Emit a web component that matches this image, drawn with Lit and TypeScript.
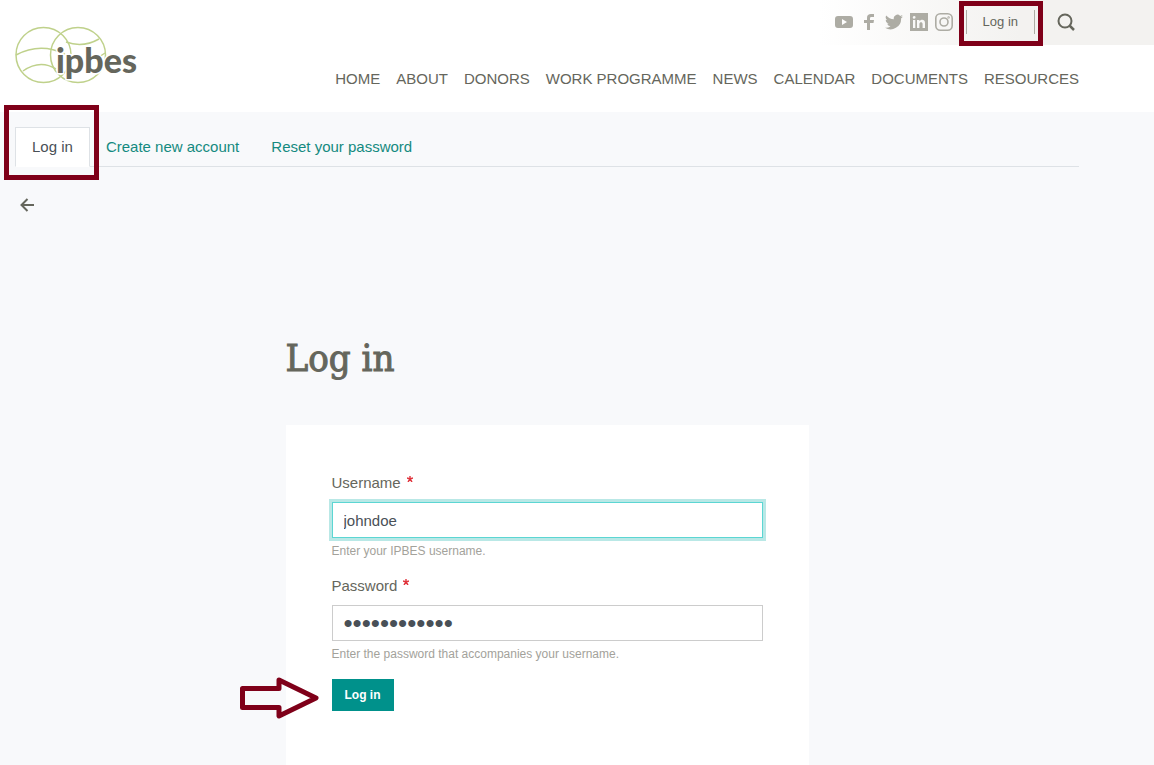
import { LitElement, html, css } from "lit";
import { customElement } from "lit/decorators.js";

const NAV = ["Home", "About", "Donors", "Work programme", "News", "Calendar", "Documents", "Resources"];

@customElement("site-header")
export class SiteHeader extends LitElement {
  static styles = css`
    :host { display: block; background: #fff; color: #65665c; }
    a { color: inherit; text-decoration: none; }
    svg { display: block; }
    .header { display: flex; justify-content: space-between; min-height: 112px; }
    .logo { padding: 24px 0 0 15px; }
    .wordmark { font: 900 34px Lato, sans-serif; fill: #65665c; }
    .right { display: flex; flex-direction: column; align-items: flex-end; }
    .top {
      display: flex; align-items: center; height: 45px; box-sizing: border-box;
      padding: 0 79px 1px 16px;
      background: linear-gradient(to right, #fff, #f3f2f0 60%);
    }
    .social { display: flex; align-items: center; gap: 7px; margin-right: 13px; color: #adaca4; }
    .login {
      position: relative; font-size: 13px; line-height: 24px; padding: 0 16px;
      border: solid #adaca4; border-width: 0 1px;
    }
    .mark {
      position: absolute; inset: -9px -9px -12px -8px; border: 5px solid #7f0019; pointer-events: none;
    }
    .search { border: 0; background: none; padding: 0; margin-left: 22px; color: #65665c; }
    nav { display: flex; flex-wrap: wrap; gap: 16px; padding: 22px 75px 0 0; font-size: 15px; line-height: 24px; text-transform: uppercase; }
  `;
  render() {
    return html`<header class="header">
      <a class="logo" href="#" aria-label="ipbes">
        <svg width="136" height="62" viewBox="0 0 136 62">
          <g fill="none" stroke="#bfd18b" stroke-width="1.5">
            <circle cx="28.500" cy="31" r="27.500" />
            <circle cx="63" cy="31" r="27.500" />
            <path d="M1 31Q25 18 50 30M8 47Q25 35 41 45M51 18Q68 24 84 15M84 33L90 29" />
          </g>
          <text class="wordmark" x="41" y="49" stroke="#fff" stroke-width="3" paint-order="stroke">ipbes</text>
        </svg>
      </a>
      <div class="right">
        <div class="top">
          <div class="social">
            <a href="#" aria-label="YouTube"><svg width="18" height="18" viewBox="0 0 18 18"><path fill="currentColor" fill-rule="evenodd" d="M3 3h12q3 0 3 3v6q0 3-3 3H3q-3 0-3-3V6q0-3 3-3zM7 6v6l5-3z" /></svg></a>
            <a href="#" aria-label="Facebook"><svg width="18" height="18" viewBox="0 0 18 18"><path fill="currentColor" d="M7 17V10H4V7h3V5c0-3 1.500-4 4-4h3v3h-2c-1.500 0-2 .4-2 1.500V7h4l-.5 3H10v7z" /></svg></a>
            <a href="#" aria-label="Twitter"><svg width="18" height="18" viewBox="0 0 24 24"><path fill="currentColor" d="M24 4.600a10 10 0 0 1-2.800.8 5 5 0 0 0 2.100-2.700 10 10 0 0 1-3.100 1.200 4.900 4.900 0 0 0-8.400 4.500A14 14 0 0 1 1.700 3.200a4.900 4.900 0 0 0 1.500 6.500 5 5 0 0 1-2.200-.6 4.900 4.900 0 0 0 3.900 4.900 5 5 0 0 1-2.200.1 4.900 4.900 0 0 0 4.600 3.400A9.900 9.900 0 0 1 0 19.500a14 14 0 0 0 21.500-12.400A10 10 0 0 0 24 4.600z" /></svg></a>
            <a href="#" aria-label="LinkedIn"><svg width="18" height="18" viewBox="0 0 18 18"><path fill="currentColor" fill-rule="evenodd" d="M0 0h18v18H0zM3 7v8h2.300V7zM4.100 3a1.400 1.400 0 1 0 .1 2.800A1.400 1.400 0 0 0 4.100 3zM7 7v8h2.400v-4c0-2.500 3.200-2.500 3.200 0v4H15v-5c0-4-4-4-5.600-1.800V7z" /></svg></a>
            <a href="#" aria-label="Instagram"><svg width="18" height="18" viewBox="0 0 18 18" fill="none" stroke="currentColor" stroke-width="1.600"><rect x=".8" y=".8" width="16.400" height="16.400" rx="4.500" /><circle cx="9" cy="9" r="4" /><circle cx="13.600" cy="4.400" r=".4" /></svg></a>
          </div>
          <a class="login" href="#">Log in<span class="mark"></span></a>
          <button class="search" aria-label="Search"><svg width="18" height="18" viewBox="0 0 18 18" fill="none" stroke="currentColor" stroke-width="2"><circle cx="8" cy="8" r="6.500" /><path d="M12.500 12.500L17 17" stroke-width="2.500" /></svg></button>
        </div>
        <nav>${NAV.map((n) => html`<a href="#">${n}</a>`)}</nav>
      </div>
    </header>`;
  }
}

@customElement("login-form")
export class LoginForm extends LitElement {
  static styles = css`
    :host { display: flex; flex-direction: column; flex: 1; }
    .card { position: relative; flex: 1; background: #fff; padding: 46px 46px 54px; }
    .field + .field { margin-top: 14px; }
    label { display: flex; gap: 6px; font-size: 15px; line-height: 24px; color: #65665c; margin-bottom: 7px; }
    .star { margin-top: 5px; }
    input {
      display: block; box-sizing: border-box; width: 100%; height: 36px; padding: 0 11px;
      border: 1px solid #ccc; border-radius: 0; background: #fff; color: #495057;
      font: 15px "Liberation Sans", Arial, sans-serif; outline: 0;
    }
    .active { border-color: #5cd6d3; box-shadow: 0 0 0 3px #b9e8e6; }
    .secret { font-size: 26px; }
    .help { font-size: 12px; line-height: 18px; color: #a3a29b; margin: 4px 0 0; }
    .actions { position: relative; margin-top: 16px; }
    .submit {
      display: block; height: 32px; padding: 0 13px; border: 0; background: #00918b; color: #fff;
      font: bold 12px "Liberation Sans", Arial, sans-serif;
    }
    .arrow { position: absolute; left: -92px; top: -3px; }
  `;
  star() {
    return html`<svg class="star" width="6" height="6" viewBox="0 0 6 6" stroke="#e0343c" stroke-width="1.400" aria-hidden="true"><path d="M3 0v3M0 2l3 1 3-1M1 6l2-3 2 3" fill="none" /></svg>`;
  }
  render() {
    return html`<form class="card" @submit=${(e: Event) => e.preventDefault()}>
      <div class="field">
        <label for="user">Username ${this.star()}</label>
        <input id="user" class="active" type="text" value="johndoe" required />
        <p class="help">Enter your IPBES username.</p>
      </div>
      <div class="field">
        <label for="pass">Password ${this.star()}</label>
        <input id="pass" class="secret" type="password" value="secretsecret" required />
        <p class="help">Enter the password that accompanies your username.</p>
      </div>
      <div class="actions">
        <button class="submit" type="submit">Log in</button>
        <svg class="arrow" width="80" height="44" viewBox="0 0 80 44" aria-hidden="true"><path d="M2.500 12.500H39V4L76 22 39 40V31.500H2.500z" fill="none" stroke="#7f0019" stroke-width="5" stroke-linejoin="round" /></svg>
      </div>
    </form>`;
  }
}

@customElement("app-root")
export class AppRoot extends LitElement {
  static styles = css`
    :host {
      display: flex; flex-direction: column; min-height: 100vh; background: #f8f9fb;
      font: 15px/24px "Liberation Sans", Arial, sans-serif; color: #65665c;
    }
    a { text-decoration: none; color: #148a80; }
    main { display: flex; flex-direction: column; flex: 1; padding: 15px 75px 0 15px; }
    .tabs { display: flex; border-bottom: 1px solid #dee2e6; }
    .tab { position: relative; padding: 8px 16px 7px; }
    .current {
      color: #495057; background: #fff; border: 1px solid #dee2e6; border-bottom-color: #fff;
      padding: 7px 16px; margin-bottom: -1px;
    }
    .mark { position: absolute; inset: -23px -10px -14px -12px; border: 5px solid #7f0019; pointer-events: none; }
    .back { align-self: flex-start; padding: 31px 0 0 5px; color: #65665c; }
    .back svg { display: block; }
    .column { display: flex; flex-direction: column; flex: 1; width: 100%; max-width: 523px; margin: 0 auto; }
    h1 {
      font: 38px/48px "Roboto Slab", "DejaVu Serif Condensed", "DejaVu Serif", serif;
      -webkit-text-stroke: 1px #65665c;
      margin: 122px 0 43px;
    }
  `;
  render() {
    return html`<site-header></site-header>
      <main>
        <div class="tabs">
          <a class="tab current" href="#">Log in<span class="mark"></span></a>
          <a class="tab" href="#">Create new account</a>
          <a class="tab" href="#">Reset your password</a>
        </div>
        <a class="back" href="#" aria-label="Back"><svg width="14" height="14" viewBox="0 0 14 14" fill="none" stroke="currentColor" stroke-width="2"><path d="M14 7H2M7.500 1L1.500 7l6 6" /></svg></a>
        <div class="column">
          <h1>Log in</h1>
          <login-form></login-form>
        </div>
      </main>`;
  }
}
